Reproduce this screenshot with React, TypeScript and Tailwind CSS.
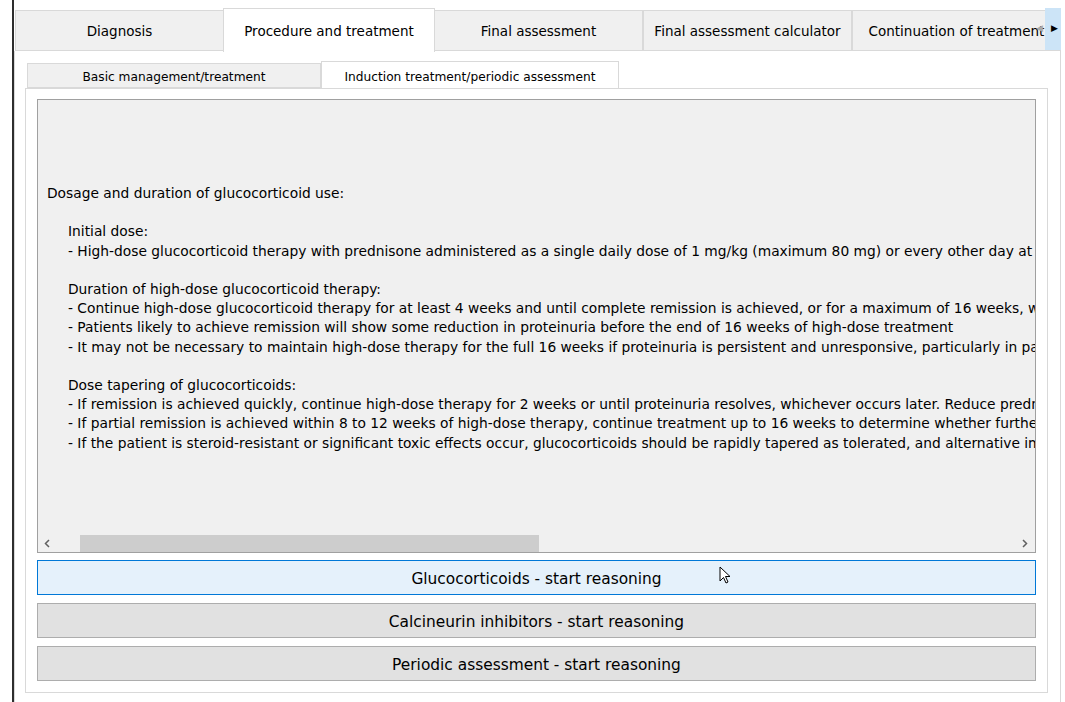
import React from 'react';

const mainTabs = [
  { label: 'Diagnosis', active: false },
  { label: 'Procedure and treatment', active: true },
  { label: 'Final assessment', active: false },
  { label: 'Final assessment calculator', active: false },
  { label: 'Continuation of treatment', active: false },
];

const subTabs = [
  { label: 'Basic management/treatment', active: false },
  { label: 'Induction treatment/periodic assessment', active: true },
];

// null = empty line, indent = nested under a heading
const lines: ({ text: string; indent: boolean } | null)[] = [
  { text: 'Dosage and duration of glucocorticoid use:', indent: false },
  null,
  { text: 'Initial dose:', indent: true },
  { text: '- High-dose glucocorticoid therapy with prednisone administered as a single daily dose of 1 mg/kg (maximum 80 mg) or every other day at 2 mg/kg (maximum 120 mg)', indent: true },
  null,
  { text: 'Duration of high-dose glucocorticoid therapy:', indent: true },
  { text: '- Continue high-dose glucocorticoid therapy for at least 4 weeks and until complete remission is achieved, or for a maximum of 16 weeks, whichever comes first', indent: true },
  { text: '- Patients likely to achieve remission will show some reduction in proteinuria before the end of 16 weeks of high-dose treatment', indent: true },
  { text: '- It may not be necessary to maintain high-dose therapy for the full 16 weeks if proteinuria is persistent and unresponsive, particularly in patients at risk', indent: true },
  null,
  { text: 'Dose tapering of glucocorticoids:', indent: true },
  { text: '- If remission is achieved quickly, continue high-dose therapy for 2 weeks or until proteinuria resolves, whichever occurs later. Reduce prednisone gradually', indent: true },
  { text: '- If partial remission is achieved within 8 to 12 weeks of high-dose therapy, continue treatment up to 16 weeks to determine whether further reduction occurs', indent: true },
  { text: '- If the patient is steroid-resistant or significant toxic effects occur, glucocorticoids should be rapidly tapered as tolerated, and alternative immunosuppression used', indent: true },
];

const buttons = [
  { label: 'Glucocorticoids - start reasoning', hover: true },
  { label: 'Calcineurin inhibitors - start reasoning', hover: false },
  { label: 'Periodic assessment - start reasoning', hover: false },
];

function MainTab({ label, active }: { label: string; active: boolean }) {
  if (active) {
    return (
      <div className="relative z-10 -mx-[1px] flex h-[44px] w-[212px] shrink-0 items-center justify-center border border-b-0 border-[#d9d9d9] bg-white pt-[2px] text-[13.5px] text-black">
        {label}
      </div>
    );
  }
  return (
    <div className="mt-[2px] flex h-[41px] w-[209px] shrink-0 items-center justify-center whitespace-nowrap border border-[#d9d9d9] bg-[#f0f0f0] pt-[1px] text-[13.5px] text-black">
      {label}
    </div>
  );
}

function SubTab({ label, active }: { label: string; active: boolean }) {
  if (active) {
    return (
      <div className="relative z-10 flex h-[27px] w-[298px] items-center justify-center border border-b-0 border-[#d9d9d9] bg-white pt-[4px] text-[12.2px] text-black">
        {label}
      </div>
    );
  }
  return (
    <div className="mt-[2px] flex h-[25px] w-[294px] items-center justify-center border border-[#d9d9d9] bg-[#f0f0f0] pt-[4px] text-[12.2px] text-black">
      {label}
    </div>
  );
}

function Cursor() {
  return (
    <svg className="absolute left-[719px] top-[566px]" width="13" height="19" viewBox="0 0 13 19">
      <path d="M1 1 L1 15 L4.5 11.5 L7 17 L9 16 L6.5 10.5 L11 10.5 Z" fill="white" stroke="black" strokeWidth="1" strokeLinejoin="round" />
    </svg>
  );
}

export default function App() {
  return (
    <div
      className="relative flex h-[702px] w-[1065px] overflow-hidden bg-white"
      style={{ fontFamily: '"DejaVu Sans", Tahoma, sans-serif' }}
    >
      <div className="w-3 shrink-0" />
      <div className="w-[2px] shrink-0 bg-[#2e2e2e]" />

      <div className="flex w-[1047px] shrink-0 flex-col pt-2">
        {/* main tab strip */}
        <div className="relative flex h-[43px] shrink-0 pl-[1px]">
          {mainTabs.map((t) => (
            <MainTab key={t.label} {...t} />
          ))}
          <div className="absolute right-0 top-0 z-20 flex h-[42px] w-[16px] items-center justify-end bg-[#cce4f7] pr-[3px]">
            <span className="absolute -left-[9px] text-[9px] text-[#a8a8a8]">◀</span>
            <span className="text-[9px] text-black">▶</span>
          </div>
        </div>

        {/* main pane */}
        <div className="flex h-[680px] shrink-0 flex-col border border-t-0 border-[#d9d9d9] bg-white pl-[10px] pr-[12px] pt-[11px]">
          <div className="flex h-[26px] items-end pl-[2px]">
            {subTabs.map((t) => (
              <SubTab key={t.label} {...t} />
            ))}
          </div>

          <div className="flex h-[605px] flex-col border border-[#d9d9d9] bg-white px-[11px] pt-[10px]">
            {/* text view */}
            <div className="flex h-[454px] flex-col border border-[#a0a0a0] bg-[#f0f0f0]">
              <div className="flex-1 overflow-hidden pl-[9px] pt-[84px] text-[13.8px] leading-[19.2px] text-black">
                {lines.map((l, i) =>
                  l ? (
                    <div key={i} className={`whitespace-nowrap ${l.indent ? 'pl-[21px]' : ''}`}>
                      {l.text}
                    </div>
                  ) : (
                    <div key={i} className="h-[19.2px]" />
                  )
                )}
              </div>
              <div className="flex h-[17px] items-center bg-[#f0f0f0]">
                <div className="flex w-[17px] items-center justify-center">
                  <svg width="6" height="9" viewBox="0 0 6 9">
                    <path d="M5 1 L1.5 4.5 L5 8" fill="none" stroke="#606060" strokeWidth="1.5" />
                  </svg>
                </div>
                <div className="flex h-full flex-1 pl-[25px]">
                  <div className="h-full w-[459px] bg-[#cdcdcd]" />
                </div>
                <div className="flex w-[20px] items-center justify-center">
                  <svg width="6" height="9" viewBox="0 0 6 9">
                    <path d="M1 1 L4.5 4.5 L1 8" fill="none" stroke="#606060" strokeWidth="1.5" />
                  </svg>
                </div>
              </div>
            </div>

            {/* action buttons */}
            <div className="mt-[7px] flex flex-col gap-[8px]">
              {buttons.map((b) => (
                <div
                  key={b.label}
                  className={`flex h-[35px] items-center justify-center border pt-[4px] text-[15.4px] text-black ${
                    b.hover ? 'border-[#0078d7] bg-[#e5f1fb]' : 'border-[#adadad] bg-[#e1e1e1]'
                  }`}
                >
                  {b.label}
                </div>
              ))}
            </div>
          </div>
        </div>
      </div>

      <Cursor />
    </div>
  );
}
